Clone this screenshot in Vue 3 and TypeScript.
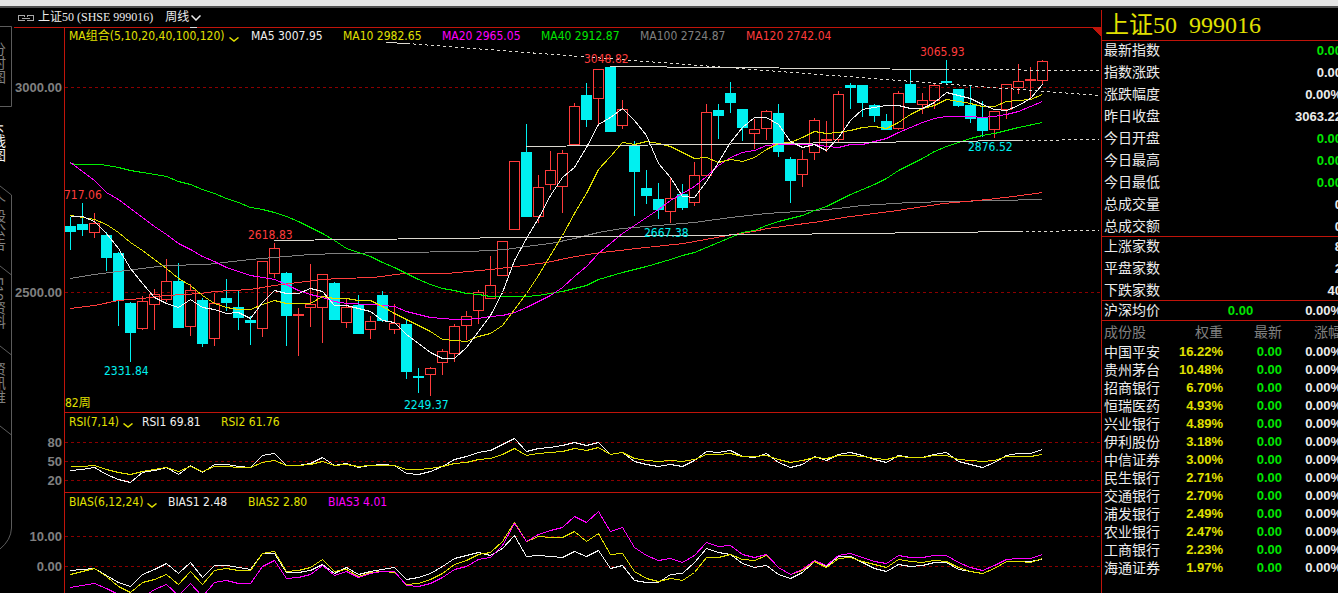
<script setup lang="ts">
type Candle = [dir: 'u' | 'd', high: number, top: number, bottom: number, low: number]
type Point = [number, number]

const STEP = 12
const ORIGIN = 70

const candles: Candle[] = [
  ['d', 217, 226, 232, 250], ['d', 203, 224, 230, 236], ['u', 213, 223, 233, 238], ['d', 232, 235, 258, 271],
  ['d', 252, 253, 301, 326], ['d', 302, 303, 333, 362], ['u', 296, 301, 329, 330], ['u', 289, 294, 305, 330],
  ['u', 259, 281, 300, 302], ['d', 263, 281, 328, 328], ['u', 284, 290, 327, 336], ['d', 298, 300, 344, 347],
  ['u', 293, 303, 339, 346], ['d', 279, 298, 303, 311], ['d', 290, 307, 318, 330], ['d', 316, 320, 323, 345],
  ['u', 261, 261, 329, 337], ['u', 243, 248, 274, 278], ['d', 272, 273, 316, 346], ['u', 308, 314, 316, 356],
  ['u', 264, 304, 308, 327], ['u', 274, 274, 308, 343], ['d', 282, 283, 320, 320], ['u', 299, 307, 323, 328],
  ['d', 295, 305, 334, 334], ['u', 316, 321, 330, 339], ['d', 291, 295, 321, 322], ['u', 304, 323, 330, 334],
  ['d', 320, 324, 372, 379], ['d', 368, 376, 378, 393], ['u', 367, 368, 375, 396], ['u', 349, 351, 363, 375],
  ['u', 324, 326, 354, 362], ['u', 311, 316, 326, 340], ['u', 290, 292, 311, 324], ['u', 256, 285, 299, 299],
  ['u', 241, 241, 276, 276], ['u', 161, 161, 230, 230], ['d', 124, 152, 217, 217], ['u', 175, 187, 217, 223],
  ['u', 151, 170, 185, 190], ['u', 150, 153, 187, 213], ['u', 103, 106, 145, 145], ['d', 83, 95, 120, 127],
  ['u', 69, 69, 99, 124], ['d', 67, 67, 132, 132], ['u', 100, 109, 126, 129], ['d', 141, 145, 172, 216],
  ['d', 170, 188, 196, 204], ['d', 183, 199, 210, 219], ['u', 177, 198, 212, 223], ['d', 184, 194, 208, 210],
  ['u', 162, 175, 203, 206], ['u', 104, 112, 176, 176], ['d', 104, 110, 116, 139], ['d', 82, 93, 103, 113],
  ['d', 109, 109, 128, 141], ['u', 119, 129, 134, 149], ['u', 110, 111, 129, 140], ['d', 104, 113, 152, 157],
  ['d', 157, 159, 181, 203], ['u', 150, 159, 175, 187], ['u', 118, 120, 153, 160], ['u', 121, 139, 141, 152],
  ['u', 91, 94, 140, 142], ['d', 83, 85, 88, 109], ['d', 85, 85, 103, 117], ['d', 104, 105, 116, 122],
  ['d', 114, 121, 130, 130], ['u', 91, 93, 129, 130], ['d', 69, 84, 103, 103], ['u', 93, 100, 105, 114],
  ['u', 83, 85, 101, 109], ['d', 60, 81, 83, 84], ['d', 89, 89, 106, 107], ['d', 85, 105, 119, 123],
  ['d', 101, 117, 131, 137], ['u', 111, 111, 130, 138], ['u', 84, 84, 110, 119], ['u', 64, 81, 88, 94],
  ['u', 67, 79, 81, 99], ['u', 60, 61, 81, 84],
]

const ma5 = [216, 216, 221, 233, 248, 268, 283, 297, 303, 307, 299, 307, 309, 313, 312, 318, 302, 290, 293, 293, 288, 291, 305, 305, 308, 311, 320, 322, 334, 343, 352, 358, 358, 347, 331, 315, 292, 260, 238, 218, 195, 177, 167, 147, 124, 117, 108, 120, 135, 163, 177, 196, 197, 181, 162, 142, 127, 117, 117, 124, 141, 147, 144, 150, 137, 120, 109, 107, 105, 105, 108, 108, 102, 92, 95, 98, 104, 109, 110, 105, 98, 84]
const ma10 = [215, 217, 219, 224, 232, 242, 250, 259, 268, 278, 285, 295, 303, 307, 309, 309, 304, 300, 303, 303, 303, 296, 298, 298, 300, 300, 306, 313, 319, 325, 331, 339, 340, 341, 336, 333, 325, 309, 293, 275, 255, 235, 213, 193, 169, 156, 142, 144, 141, 143, 146, 152, 158, 157, 162, 159, 161, 157, 149, 143, 142, 137, 131, 133, 132, 130, 127, 126, 128, 122, 114, 108, 105, 99, 101, 103, 106, 106, 101, 100, 99, 94]
const rsi1 = [470, 469, 467, 474, 479, 482, 472, 470, 467, 474, 465, 472, 464, 464, 466, 467, 455, 453, 465, 465, 463, 457, 465, 463, 467, 465, 464, 465, 473, 474, 471, 466, 459, 456, 452, 450, 444, 438, 451, 448, 447, 445, 442, 445, 442, 454, 452, 461, 464, 466, 464, 466, 460, 451, 452, 450, 456, 457, 453, 462, 467, 464, 456, 460, 454, 452, 455, 459, 462, 455, 457, 457, 454, 452, 461, 464, 467, 462, 455, 453, 453, 449]
const rsi2 = [466, 466, 465, 469, 472, 474, 471, 469, 467, 471, 466, 471, 466, 466, 467, 467, 462, 460, 465, 465, 464, 461, 465, 464, 466, 465, 465, 465, 469, 469, 468, 466, 463, 462, 459, 458, 454, 448, 455, 453, 452, 451, 448, 450, 447, 454, 452, 458, 460, 461, 460, 461, 459, 454, 454, 453, 456, 456, 455, 459, 462, 460, 457, 458, 455, 455, 456, 458, 459, 456, 457, 457, 455, 455, 459, 460, 461, 460, 456, 456, 456, 454]
const bias1 = [570, 569, 568, 575, 582, 586, 574, 569, 563, 573, 562, 577, 565, 565, 567, 569, 553, 553, 572, 572, 570, 564, 573, 567, 574, 571, 569, 567, 579, 577, 573, 566, 558, 555, 552, 555, 548, 535, 556, 555, 556, 557, 551, 556, 550, 568, 565, 580, 582, 582, 574, 573, 562, 548, 552, 554, 563, 567, 565, 574, 578, 572, 561, 566, 556, 556, 562, 568, 571, 564, 566, 565, 562, 562, 569, 571, 573, 568, 561, 561, 561, 559]
const bias2 = [574, 571, 568, 576, 586, 592, 582, 579, 574, 584, 571, 584, 570, 568, 570, 570, 553, 551, 571, 570, 567, 559, 571, 569, 576, 572, 571, 572, 584, 583, 579, 573, 564, 560, 554, 552, 541, 522, 541, 536, 537, 537, 531, 541, 533, 554, 553, 571, 578, 581, 578, 580, 572, 557, 557, 554, 559, 560, 555, 567, 574, 570, 561, 567, 558, 557, 561, 564, 567, 559, 561, 562, 560, 561, 567, 571, 573, 568, 561, 561, 562, 558]
const bias3 = [587, 585, 583, 588, 594, 600, 597, 589, 584, 595, 583, 596, 582, 580, 583, 583, 566, 560, 578, 577, 574, 565, 575, 571, 577, 573, 571, 571, 585, 586, 583, 577, 569, 566, 559, 557, 545, 523, 541, 534, 530, 527, 516, 522, 511, 531, 527, 547, 555, 560, 558, 562, 555, 542, 546, 545, 554, 557, 554, 567, 574, 569, 560, 565, 555, 553, 557, 561, 563, 555, 557, 557, 555, 555, 562, 567, 570, 565, 559, 558, 558, 554]

const ma20: Point[] = [[70, 162], [78, 168], [94, 180], [106, 192], [118, 199], [130, 208], [142, 217], [154, 226], [166, 234], [178, 243], [190, 249], [202, 256], [214, 261], [226, 267], [238, 271], [250, 275], [262, 277], [274, 279], [286, 284], [298, 290], [310, 294], [322, 297], [334, 301], [346, 303], [370, 304], [382, 305], [394, 306], [406, 311], [418, 314], [430, 317], [442, 318], [454, 319], [466, 319], [478, 318], [490, 316], [502, 315], [514, 312], [526, 307], [538, 301], [550, 295], [562, 287], [574, 276], [586, 266], [598, 253], [610, 243], [622, 233], [634, 225], [646, 217], [658, 209], [670, 200], [682, 193], [694, 186], [706, 176], [718, 165], [730, 157], [742, 152], [754, 150], [766, 145], [778, 144], [814, 144], [826, 146], [838, 147], [850, 144], [862, 144], [874, 141], [886, 138], [898, 132], [910, 127], [922, 122], [934, 118], [946, 116], [970, 116], [982, 117], [994, 116], [1006, 114], [1018, 111], [1030, 106], [1042, 101]]
const ma40: Point[] = [[70, 163], [76, 164], [100, 164], [118, 167], [130, 170], [142, 172], [166, 176], [178, 181], [190, 184], [202, 189], [214, 193], [226, 198], [238, 202], [250, 207], [262, 209], [274, 212], [286, 216], [298, 221], [310, 227], [322, 233], [334, 240], [346, 248], [358, 252], [370, 256], [382, 262], [394, 267], [406, 273], [418, 279], [430, 284], [442, 288], [454, 290], [466, 293], [478, 294], [490, 296], [526, 296], [538, 295], [550, 293], [562, 291], [574, 288], [586, 285], [598, 279], [622, 272], [646, 266], [670, 259], [682, 255], [694, 252], [706, 247], [718, 242], [730, 237], [742, 232], [754, 230], [766, 225], [778, 221], [802, 215], [814, 210], [826, 206], [838, 200], [850, 194], [862, 189], [874, 184], [886, 178], [898, 170], [910, 164], [922, 158], [934, 151], [946, 146], [958, 142], [970, 138], [982, 135], [994, 133], [1018, 127], [1042, 122]]
const ma100: Point[] = [[70, 278], [94, 274], [118, 271], [142, 268], [166, 265], [206, 264], [250, 259], [286, 256], [310, 254], [340, 253], [390, 252], [470, 251], [505, 249], [526, 246], [550, 243], [574, 238], [598, 232], [622, 228], [646, 226], [694, 222], [730, 217], [766, 213], [814, 210], [838, 208], [862, 205], [910, 202], [994, 200], [1042, 199]]
const ma120: Point[] = [[70, 308], [94, 305], [118, 300], [142, 298], [166, 295], [200, 293], [214, 291], [250, 289], [274, 285], [298, 282], [322, 279], [340, 278], [373, 277], [403, 273], [446, 273], [490, 269], [516, 266], [546, 262], [570, 257], [593, 253], [636, 248], [683, 243], [727, 235], [753, 231], [767, 228], [820, 221], [843, 217], [897, 210], [943, 203], [987, 199], [1013, 196], [1042, 192]]

const toPath = (points: Point[]): string => points.map(([x, y]) => `${x + 0.5},${y + 0.5}`).join(' ')
const series = (values: number[]): string => toPath(values.map((y, i): Point => [ORIGIN + i * STEP, y]))

const averages = [
  { color: '#808080', points: toPath(ma100) },
  { color: '#ff3c3c', points: toPath(ma120) },
  { color: '#00f000', points: toPath(ma40) },
  { color: '#ff00ff', points: toPath(ma20) },
  { color: '#e0e000', points: series(ma10) },
  { color: '#f4f4f4', points: series(ma5) },
]

const bars = candles.map(([dir, high, top, bottom, low], i) => ({
  x: ORIGIN + i * STEP, up: dir === 'u', flat: bottom - top <= 2, high, top, bottom, low,
}))

const trends = [
  { x1: 386, y1: 42, x2: 407, y2: 43, dashed: false },
  { x1: 407, y1: 43, x2: 1099, y2: 95, dashed: true },
  { x1: 610, y1: 66, x2: 946, y2: 69, dashed: false },
  { x1: 946, y1: 69, x2: 1099, y2: 70, dashed: true },
  { x1: 526, y1: 146, x2: 1020, y2: 140, dashed: false },
  { x1: 1020, y1: 140, x2: 1099, y2: 139, dashed: true },
  { x1: 274, y1: 240, x2: 1020, y2: 231, dashed: false },
  { x1: 1020, y1: 231, x2: 1099, y2: 230, dashed: true },
]

const marks = [
  { x: 64, y: 199, text: '717.06', color: '#ff3c3c' },
  { x: 248, y: 239, text: '2618.83', color: '#ff3c3c' },
  { x: 584, y: 63, text: '3048.82', color: '#ff3c3c' },
  { x: 920, y: 56, text: '3065.93', color: '#ff3c3c' },
  { x: 968, y: 151, text: '2876.52', color: '#00f0f0' },
  { x: 644, y: 237, text: '2667.38', color: '#00f0f0' },
  { x: 104, y: 375, text: '2331.84', color: '#00f0f0' },
  { x: 404, y: 409, text: '2249.37', color: '#00f0f0' },
  { x: 65, y: 407, text: '82周', color: '#e0e000' },
]

const panels = [
  {
    id: 'ma', title: 'MA组合(5,10,20,40,100,120)', box: '13 27 1088 385', top: 27, left: 14, bottom: 412,
    ticks: [{ y: 87, text: '3000.00' }, { y: 292, text: '2500.00' }],
    items: [
      { text: 'MA5 3007.95', color: '#f0f0f0' }, { text: 'MA10 2982.65', color: '#e0e000' },
      { text: 'MA20 2965.05', color: '#ff00ff' }, { text: 'MA40 2912.87', color: '#00e600' },
      { text: 'MA100 2724.87', color: '#808080' }, { text: 'MA120 2742.04', color: '#ff3c3c' },
    ],
    lines: averages,
  },
  {
    id: 'rsi', title: 'RSI(7,14)', box: '13 412 1088 80', top: 412, left: 64, bottom: 492,
    ticks: [{ y: 442, text: '80' }, { y: 461, text: '50' }, { y: 480, text: '20' }],
    items: [{ text: 'RSI1 69.81', color: '#f0f0f0' }, { text: 'RSI2 61.76', color: '#e0e000' }],
    lines: [{ color: '#f4f4f4', points: series(rsi1) }, { color: '#e0e000', points: series(rsi2) }],
  },
  {
    id: 'bias', title: 'BIAS(6,12,24)', box: '13 492 1088 101', top: 492, left: 64, bottom: 593,
    ticks: [{ y: 536, text: '10.00' }, { y: 566, text: '0.00' }],
    items: [
      { text: 'BIAS1 2.48', color: '#f0f0f0' }, { text: 'BIAS2 2.80', color: '#e0e000' },
      { text: 'BIAS3 4.01', color: '#ff00ff' },
    ],
    lines: [
      { color: '#f4f4f4', points: series(bias1) }, { color: '#e0e000', points: series(bias2) },
      { color: '#ff00ff', points: series(bias3) },
    ],
  },
]

const tabs = ['分时图', 'K线图', '个股公告', 'F10资料', '资讯堆']

const quotes = [
  { name: '最新指数', value: '0.00', green: true }, { name: '指数涨跌', value: '0.00', green: false },
  { name: '涨跌幅度', value: '0.00%', green: false }, { name: '昨日收盘', value: '3063.22', green: false },
  { name: '今日开盘', value: '0.00', green: true }, { name: '今日最高', value: '0.00', green: true },
  { name: '今日最低', value: '0.00', green: true }, { name: '总成交量', value: '0', green: false },
  { name: '总成交额', value: '0', green: false },
]
const counts = [
  { name: '上涨家数', value: '8' }, { name: '平盘家数', value: '2' }, { name: '下跌家数', value: '40' },
]
const stocks: [string, string][] = [
  ['中国平安', '16.22%'], ['贵州茅台', '10.48%'], ['招商银行', '6.70%'], ['恒瑞医药', '4.93%'], ['兴业银行', '4.89%'],
  ['伊利股份', '3.18%'], ['中信证券', '3.00%'], ['民生银行', '2.71%'], ['交通银行', '2.70%'], ['浦发银行', '2.49%'],
  ['农业银行', '2.47%'], ['工商银行', '2.23%'], ['海通证券', '1.97%'],
]
</script>

<template>
  <div class="app">
    <div class="strip"></div>
    <div class="body">
      <nav class="tabs" aria-label="视图">
        <svg class="outline" width="13" height="550" viewBox="0 8 13 550" fill="none" stroke="#5c5c5c" aria-hidden="true">
          <path d="M0 26.5H11.5V106.5H0M0 186L11.5 195V528Q11 540 0 549M0 266L11.5 275M0 346L11.5 355M0 426L11.5 435" />
        </svg>
        <button v-for="(tab, i) in tabs" :key="tab" type="button" class="tab" :class="{ active: i === 1 }">{{ tab }}</button>
      </nav>

      <main class="charts">
        <header class="bar">
          <svg width="16" height="6" viewBox="0 0 16 6" fill="none" stroke="#a8a8a8" shape-rendering="crispEdges" aria-hidden="true">
            <path d="M6.500 1.500V.5H.5V5.500H6.500V4.500M9.500 1.500V.5H15.500V5.500H9.500V4.500M4 3.500H12" />
          </svg>
          <h1 class="symbol">上证50<span class="code">(SHSE 999016)</span></h1>
          <button type="button" class="period">周线
            <svg width="10" height="6" viewBox="0 0 10 6" fill="none" stroke="currentColor" stroke-width="1.500" aria-hidden="true"><path d="M.5 .5L5 5L9.500 .5" /></svg>
          </button>
        </header>

        <section v-for="p in panels" :key="p.id" class="panel" :class="p.id">
          <svg class="plot" :viewBox="p.box" role="img" :aria-label="p.title">
            <g fill="none" shape-rendering="crispEdges">
              <line v-for="t in p.ticks" :key="t.y" class="grid" x1="65" x2="1100" :y1="t.y + 0.5" :y2="t.y + 0.5" />
              <g v-if="p.id === 'ma'">
                <g v-for="b in bars" :key="b.x" :class="b.up ? 'up' : 'down'">
                  <line v-if="b.high < b.top" :x1="b.x + 0.5" :x2="b.x + 0.5" :y1="b.high" :y2="b.top" />
                  <line v-if="b.low > b.bottom" :x1="b.x + 0.5" :x2="b.x + 0.5" :y1="b.bottom" :y2="b.low" />
                  <rect v-if="b.up && !b.flat" :x="b.x - 4.5" :y="b.top + 0.5" width="10" :height="b.bottom - b.top - 1" />
                  <rect v-else class="solid" :x="b.x - 5" :y="b.top" width="11" :height="b.bottom - b.top" />
                </g>
              </g>
              <polyline v-for="(l, i) in p.lines" :key="i" :points="l.points" :stroke="l.color" />
              <g v-if="p.id === 'ma'">
                <line
                  v-for="(t, i) in trends" :key="i" class="trend" :class="{ dashed: t.dashed }"
                  :x1="t.x1" :y1="t.y1 + 0.5" :x2="t.x2" :y2="t.y2 + 0.5"
                />
                <path class="corner" d="M1092 28H1101V37Z" />
              </g>
              <path class="frame" :d="`M${p.left} ${p.top + 0.5}H1101M64.5 ${p.top}V${p.bottom}`" />
              <path v-if="p.id === 'ma'" stroke="#dcdcdc" d="M190 27.5H197" />
            </g>
            <text v-for="t in p.ticks" :key="t.text" class="tick" x="62" :y="t.y + 5" text-anchor="end">{{ t.text }}</text>
            <g v-if="p.id === 'ma'">
              <text v-for="m in marks" :key="m.text" class="mark" :x="m.x" :y="m.y" :fill="m.color">{{ m.text }}</text>
            </g>
          </svg>
          <div class="legend">
            <button type="button" class="indicator">{{ p.title }}<svg width="10" height="5" viewBox="0 0 10 5" fill="none" stroke="currentColor" stroke-width="1.500" aria-hidden="true"><path d="M.5 .5L5 4L9.500 .5" /></svg></button>
            <span v-for="item in p.items" :key="item.text" :style="{ color: item.color }">{{ item.text }}</span>
          </div>
        </section>
      </main>

      <aside class="side">
        <div class="sheet">
          <h2 class="title"><span>上证50</span><span>999016</span></h2>
          <dl class="block">
            <div v-for="q in quotes" :key="q.name" class="row">
              <dt>{{ q.name }}</dt><dd :class="{ green: q.green }">{{ q.value }}</dd>
            </div>
          </dl>
          <dl class="block">
            <div v-for="c in counts" :key="c.name" class="row"><dt>{{ c.name }}</dt><dd>{{ c.value }}</dd></div>
          </dl>
          <dl class="block">
            <div class="row"><dt>沪深均价</dt><dd class="green mid">0.00</dd><dd>0.00%</dd></div>
          </dl>
          <table class="stocks">
            <colgroup><col class="c-name" /><col class="c-weight" /><col class="c-last" /><col class="c-change" /></colgroup>
            <thead><tr><th scope="col">成份股</th><th scope="col">权重</th><th scope="col">最新</th><th scope="col">涨幅</th></tr></thead>
            <tbody>
              <tr v-for="[name, weight] in stocks" :key="name">
                <th scope="row">{{ name }}</th><td class="yellow">{{ weight }}</td><td class="green">0.00</td><td>0.00%</td>
              </tr>
            </tbody>
          </table>
        </div>
      </aside>
    </div>
  </div>
</template>

<style>
html,
body {
  background: #000;
}
</style>

<style scoped>
.app {
  --red: #c0140a;
  --cjk: "Noto Sans CJK SC", sans-serif;
  --ui: "DejaVu Sans Condensed", "Open Sans", var(--cjk);
  height: 100vh;
  overflow: hidden;
  display: flex;
  flex-direction: column;
  background: #000;
  color: #ececec;
  font: 12px/18px var(--ui);
}

.strip {
  flex: none;
  height: 6px;
  background: #e6e6e6;
  border-bottom: 2px solid #505050;
}

.body {
  flex: 1;
  min-height: 0;
  display: flex;
}

button {
  padding: 0;
  border: 0;
  background: none;
  color: inherit;
  font: inherit;
  white-space: nowrap;
  cursor: pointer;
}

.tabs {
  position: relative;
  flex: none;
  width: 13px;
  padding-top: 15px;
  box-sizing: border-box;
  overflow: hidden;
}

.outline {
  position: absolute;
  left: 0;
  top: 0;
}

.tab {
  display: block;
  width: 14px;
  height: 80px;
  margin-left: -9px;
  writing-mode: vertical-rl;
  text-align: center;
  color: #808080;
  font: 14px/14px "Liberation Sans", var(--cjk);
}

.tab.active {
  color: #f0f0f0;
}

.charts {
  flex: 1;
  min-width: 0;
}

.bar {
  display: flex;
  align-items: center;
  height: 19px;
  padding-left: 5px;
  gap: 4px;
  font: 12px/19px "Liberation Serif", var(--cjk);
}

.symbol {
  margin: 0;
  font: inherit;
  white-space: nowrap;
}

.code {
  margin-left: 3px;
}

.period {
  display: flex;
  align-items: center;
  gap: 2px;
  margin-left: 8px;
}

.panel {
  position: relative;
}

.plot {
  display: block;
  width: 100%;
  height: auto;
}

.grid {
  stroke: #8c0000;
  stroke-dasharray: 3 3;
}

.up {
  stroke: #ff3c3c;
}

.down {
  stroke: #00f0f0;
}

.solid {
  stroke: none;
  fill: #00f0f0;
}

.up .solid {
  fill: #ff3c3c;
}

.trend {
  stroke: #dcd8d0;
}

.dashed {
  stroke-dasharray: 3 3;
}

.corner {
  fill: var(--red);
}

.frame {
  stroke: var(--red);
}

.tick {
  fill: #808080;
  font: bold 13px "Liberation Sans", sans-serif;
}

.mark {
  font: 12px var(--ui);
}

.legend {
  position: absolute;
  left: 56px;
  top: 1px;
  display: grid;
  white-space: nowrap;
}

.ma .legend {
  top: 0;
  grid-template-columns: 182px 92px 99px 99px 99px 106px auto;
}

.rsi .legend {
  grid-template-columns: 73px 79px auto;
}

.bias .legend {
  grid-template-columns: 99px 80px 80px auto;
}

.indicator {
  display: flex;
  align-items: center;
  gap: 4px;
  color: #e0e000;
}

.indicator svg {
  margin-top: 6px;
}

.side {
  flex: none;
  width: 236px;
  margin-top: 2px;
  border-left: 1px solid var(--red);
  overflow: hidden;
}

.sheet {
  width: 240px;
}

.title {
  display: flex;
  align-items: center;
  gap: 12px;
  height: 30px;
  margin: 0;
  padding-left: 3px;
  color: #e0e000;
  font: 24px/30px "Liberation Serif", var(--cjk);
}

.block {
  display: flex;
  flex-direction: column;
  gap: 4px;
  margin: 0;
  padding-bottom: 1px;
  border-top: 1px solid var(--red);
}

.block + .stocks {
  border-top: 1px solid var(--red);
}

.row {
  display: flex;
  justify-content: space-between;
  height: 18px;
  padding-left: 2px;
}

dt,
th {
  font: 14px/16px var(--cjk);
  text-align: left;
}

dd,
td {
  margin: 0;
  font: bold 13px/18px "Liberation Sans", sans-serif;
  text-align: right;
}

dd {
  line-height: 20px;
}

.mid {
  flex: 1;
  padding-right: 52px;
}

.stocks {
  width: 240px;
  table-layout: fixed;
  border-spacing: 0;
}

.stocks th,
.stocks td {
  padding: 0;
  height: 18px;
  vertical-align: top;
}

.stocks tbody th {
  padding-left: 2px;
}

.stocks thead th {
  height: 22px;
  line-height: 20px;
  color: #808080;
  text-align: right;
}

.stocks thead th:first-child {
  padding-left: 2px;
  text-align: left;
}

.c-name {
  width: 66px;
}

.c-weight {
  width: 55px;
}

.c-last {
  width: 59px;
}

.c-change {
  width: 60px;
}

.green {
  color: #00e600;
}

.yellow {
  color: #e0e000;
}
</style>
